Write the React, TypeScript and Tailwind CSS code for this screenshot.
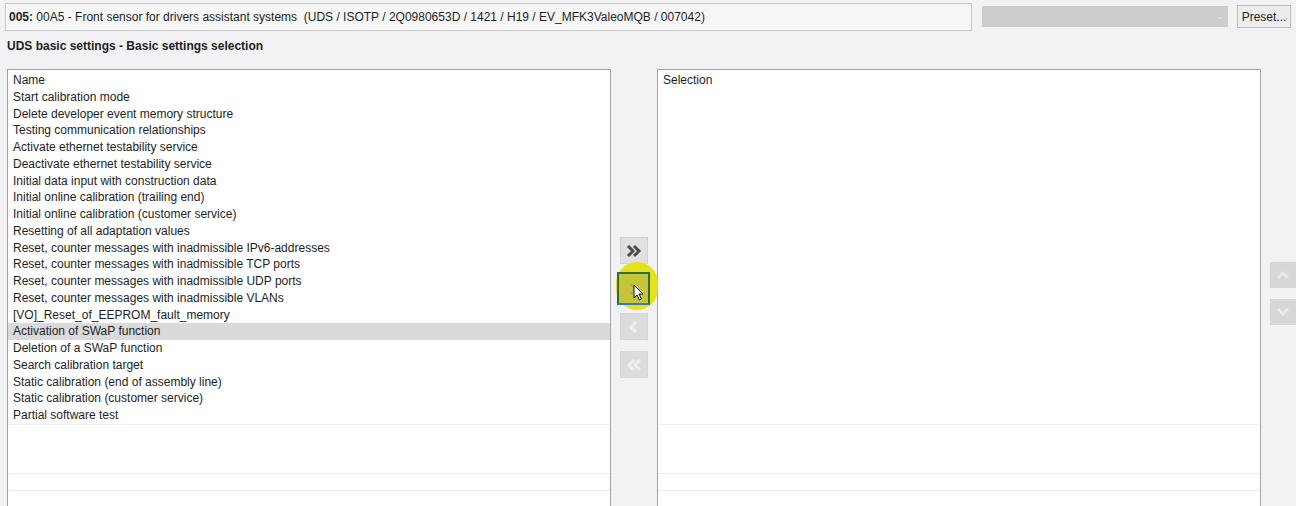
import React from "react";

const items = [
  "Start calibration mode",
  "Delete developer event memory structure",
  "Testing communication relationships",
  "Activate ethernet testability service",
  "Deactivate ethernet testability service",
  "Initial data input with construction data",
  "Initial online calibration (trailing end)",
  "Initial online calibration (customer service)",
  "Resetting of all adaptation values",
  "Reset, counter messages with inadmissible IPv6-addresses",
  "Reset, counter messages with inadmissible TCP ports",
  "Reset, counter messages with inadmissible UDP ports",
  "Reset, counter messages with inadmissible VLANs",
  "[VO]_Reset_of_EEPROM_fault_memory",
  "Activation of SWaP function",
  "Deletion of a SWaP function",
  "Search calibration target",
  "Static calibration (end of assembly line)",
  "Static calibration (customer service)",
  "Partial software test",
];

function Chevron({ dir, double, color }: { dir: "left" | "right"; double?: boolean; color: string }) {
  const pts = (x: number) =>
    dir === "right" ? `${x},4 ${x + 5},9 ${x},14` : `${x + 5},4 ${x},9 ${x + 5},14`;
  return (
    <svg width="18" height="18" viewBox="0 0 18 18">
      {double ? (
        <>
          <polyline points={pts(dir === "right" ? 3 : 4)} fill="none" stroke={color} strokeWidth="3" strokeLinejoin="miter" />
          <polyline points={pts(dir === "right" ? 9 : 10)} fill="none" stroke={color} strokeWidth="3" strokeLinejoin="miter" />
        </>
      ) : (
        <polyline points={pts(6)} fill="none" stroke={color} strokeWidth="3" strokeLinejoin="miter" />
      )}
    </svg>
  );
}

function VChevron({ up }: { up: boolean }) {
  return (
    <svg width="16" height="12" viewBox="0 0 16 12">
      <polyline
        points={up ? "3,9 8,4 13,9" : "3,3 8,8 13,3"}
        fill="none"
        stroke="#e9e9eb"
        strokeWidth="3"
      />
    </svg>
  );
}

export default function App() {
  return (
    <div
      className="w-[1296px] h-[506px] overflow-hidden bg-[#f2f2f4] text-[12px] text-[#1e1e1e] relative"
      style={{ fontFamily: '"Liberation Sans", Arial, sans-serif' }}
    >
      {/* top row */}
      <div className="flex items-start pt-[3px] pl-[5px]">
        <div className="w-[967px] h-[28px] border border-[#c9c9cc] bg-[#f6f6f7] flex items-center pl-[3px]">
          <span className="font-bold">005:</span>
          <span className="whitespace-pre">
            {" 00A5 - Front sensor for drivers assistant systems  (UDS / ISOTP / 2Q0980653D / 1421 / H19 / EV_MFK3ValeoMQB / 007042)"}
          </span>
        </div>
        <div className="ml-[10px] mt-[3px] w-[246px] h-[21px] bg-[#cdcdcf] flex items-center justify-end pr-[4px]">
          <span className="text-[8px] text-[#e4e4e6] leading-none">⌄</span>
        </div>
        <div className="ml-[9px] mt-[2px] w-[54px] h-[23px] border border-[#bdbdc0] bg-[#ededee] flex items-center justify-center text-[12px] text-[#222]">
          Preset...
        </div>
      </div>

      {/* heading */}
      <div className="pl-[7px] mt-[8px] font-bold leading-[14px]">
        UDS basic settings - Basic settings selection
      </div>

      {/* main area */}
      <div className="flex mt-[16px] pl-[7px]">
        {/* left list */}
        <div className="w-[605px] h-[460px] border border-[#a3a3a6] bg-white pt-[2px]">
          <div className="h-[16.75px] leading-[16.75px] pl-[5px]">Name</div>
          {items.map((t) => (
            <div
              key={t}
              className={`h-[16.75px] leading-[16.75px] pl-[5px] whitespace-nowrap ${
                t === "Activation of SWaP function" ? "bg-[#dadadc]" : ""
              }`}
            >
              {t}
            </div>
          ))}
          <div className="h-[16.75px] border-t border-[#f1f1f3]" />
          <div className="h-[16.75px]" />
          <div className="h-[16.75px] border-b border-[#ededf0]" />
          <div className="h-[16.75px] border-b border-[#ededf0]" />
        </div>

        {/* transfer buttons */}
        <div className="w-[46px] flex flex-col items-center pt-[168px] relative">
          <div className="w-[28px] h-[27px] bg-[#e0e0e2] border border-[#d2d2d4] flex items-center justify-center">
            <Chevron dir="right" double color="#4d4d4f" />
          </div>
          <div className="mt-[8px] relative w-[33px] h-[33px] flex items-center justify-center">
            <div className="absolute left-[-1px] top-[-10px] w-[42px] h-[48px] rounded-full bg-[#e6e21a]" />
            <div className="relative w-[33px] h-[33px] bg-[#c8c33c] border-2 border-[#2f6f33] border-b-[#3b78c9] flex items-center justify-center">
              <Chevron dir="right" color="#b6b04a" />
            </div>
            <svg className="absolute left-[16px] top-[12px]" width="12" height="17" viewBox="0 0 12 17">
              <path d="M1,1 L1,14 L4,11 L6.5,16 L8.5,15 L6,10 L10,10 Z" fill="#fff" stroke="#111" strokeWidth="1" strokeLinejoin="round" />
            </svg>
          </div>
          <div className="mt-[8px] w-[28px] h-[27px] bg-[#dcdcde] border border-[#d6d6d8] flex items-center justify-center">
            <Chevron dir="left" color="#efeff1" />
          </div>
          <div className="mt-[11px] w-[28px] h-[27px] bg-[#dcdcde] border border-[#d6d6d8] flex items-center justify-center">
            <Chevron dir="left" double color="#efeff1" />
          </div>
        </div>

        {/* right list */}
        <div className="w-[605px] h-[460px] border border-[#a3a3a6] bg-white pt-[2px]">
          <div className="h-[16.75px] leading-[16.75px] pl-[5px]">Selection</div>
          <div className="h-[335px]" />
          <div className="h-[16.75px] border-t border-[#f1f1f3]" />
          <div className="h-[16.75px]" />
          <div className="h-[16.75px] border-b border-[#ededf0]" />
          <div className="h-[16.75px] border-b border-[#ededf0]" />
        </div>

        {/* up/down buttons */}
        <div className="ml-[9px] flex flex-col pt-[193px]">
          <div className="w-[26px] h-[26px] bg-[#d7d7d9] flex items-center justify-center">
            <VChevron up />
          </div>
          <div className="mt-[11px] w-[26px] h-[26px] bg-[#d7d7d9] flex items-center justify-center">
            <VChevron up={false} />
          </div>
        </div>
      </div>
    </div>
  );
}
